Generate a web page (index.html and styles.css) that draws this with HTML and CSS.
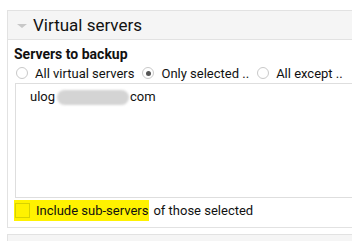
FILE: index.html
```html
<!DOCTYPE html>
<html>
<head>
<meta charset="utf-8">
<link rel="stylesheet" href="styles.css">
</head>
<body>
<div class="page">
  <div class="panel">
    <div class="panel-head">
      <span class="caret"></span>
      <span class="head-title">Virtual servers</span>
    </div>
    <div class="panel-body">
      <div class="field-title">Servers to backup</div>
      <div class="radios">
        <label class="opt"><span class="radio"></span>All virtual servers</label>
        <label class="opt"><span class="radio checked"></span>Only selected ..</label>
        <label class="opt"><span class="radio"></span>All except ..</label>
      </div>
      <div class="listbox">
        <div class="item">ulog<span class="blur"></span>com</div>
      </div>
      <div class="check-row">
        <span class="hl"><span class="checkbox"></span>Include sub-servers</span><span class="rest">of those selected</span>
      </div>
    </div>
  </div>
  <div class="panel next"></div>
</div>
</body>
</html>
```
FILE: styles.css
```css
html, body {
  margin: 0;
  padding: 0;
  background: #ffffff;
  overflow: hidden;
  width: 352px;
  height: 241px;
}
body {
  font-family: Roboto, "Liberation Sans", sans-serif;
  color: #111;
}
.page {
  padding: 10px 0 0 7px;
  width: 345px;
  overflow: hidden;
}
.panel {
  border: 1px solid #e2e2e2;
  border-right: none;
}
.panel-head {
  height: 28px;
  background: #f5f5f5;
  border-bottom: 1px solid #e2e2e2;
  display: flex;
  align-items: center;
  padding-left: 9px;
}
.caret {
  width: 0;
  height: 0;
  border-left: 5px solid transparent;
  border-right: 5px solid transparent;
  border-top: 4px solid #c8c8c8;
  margin-right: 6px;
  margin-top: 1px;
}
.head-title {
  font-size: 17px;
  color: #111;
}
.panel-body {
  padding: 6px 0 5px 6px;
}
.field-title {
  font-weight: bold;
  font-size: 14px;
  line-height: 17px;
  height: 17px;
}
.radios {
  display: flex;
  align-items: center;
  height: 20px;
  font-size: 13px;
  white-space: nowrap;
}
.opt {
  display: flex;
  align-items: center;
  margin-right: 6px;
}
.radio {
  width: 10px;
  height: 10px;
  border: 1px solid #c9c9c9;
  border-radius: 50%;
  margin: 0 7px 0 2px;
  position: relative;
  background: #fff;
}
.radio.checked::after {
  content: "";
  position: absolute;
  left: 2.5px;
  top: 2.5px;
  width: 5px;
  height: 5px;
  border-radius: 50%;
  background: #555;
}
.listbox {
  margin-left: 1px;
  border: 1px solid #dedede;
  border-right: none;
  padding: 4px 0 0 14px;
  box-sizing: border-box;
  height: 115px;
  font-size: 13px;
}
.item {
  display: flex;
  align-items: center;
  line-height: 17px;
}
.blur {
  display: inline-block;
  width: 72px;
  height: 15px;
  background: #d4d4d4;
  border-radius: 8px;
  margin: 2px 1px 0 2px;
  filter: blur(1px);
}
.check-row {
  display: flex;
  align-items: center;
  height: 24px;
  font-size: 13px;
}
.hl {
  display: flex;
  align-items: center;
  background: #fff200;
  height: 21px;
  padding-right: 1px;
}
.checkbox {
  width: 13px;
  height: 13px;
  border: 1px solid #d8d200;
  margin: 0 6px 0 1px;
}
.rest {
  margin-left: 4px;
}
.next {
  margin-top: 6px;
  height: 20px;
  background: #f5f5f5;
}
```
